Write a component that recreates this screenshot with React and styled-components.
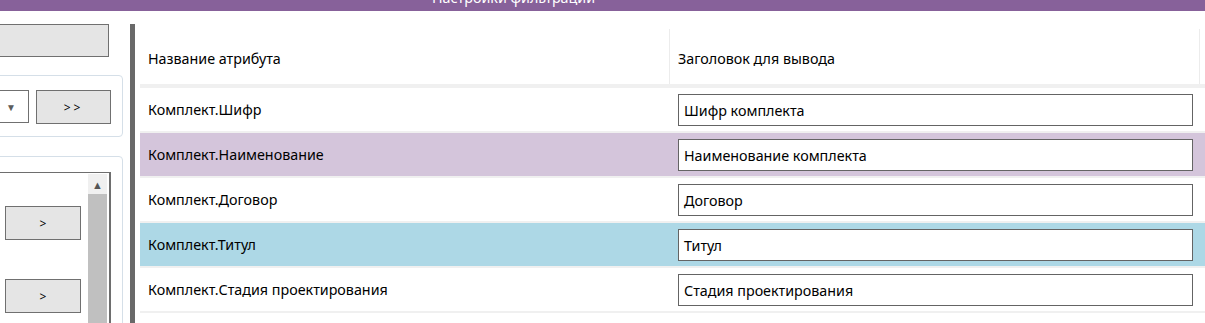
import React from 'react';
import styled, { createGlobalStyle } from 'styled-components';

const GlobalStyle = createGlobalStyle`
  html, body {
    margin: 0;
    padding: 0;
    background: #ffffff;
    font-family: "Noto Sans", "Open Sans", sans-serif;
    font-size: 14.3px;
    color: #000;
  }
`;

const Window = styled.div`
  width: 1205px;
  height: 323px;
  overflow: hidden;
  display: flex;
  flex-direction: column;
`;

const TitleBar = styled.div`
  height: 11px;
  flex: none;
  background: #87619a;
  overflow: hidden;
  padding-left: 432px;
`;

const TitleText = styled.div`
  color: #ffffff;
  font-size: 14.3px;
  line-height: 14px;
  margin-top: -9px;
  white-space: nowrap;
`;

const Main = styled.div`
  flex: 1;
  display: flex;
  min-height: 0;
`;

const LeftPanel = styled.div`
  width: 123px;
  flex: none;
  overflow: hidden;
  padding-top: 13px;
  display: flex;
  flex-direction: column;
`;

const GrayButton = styled.button`
  font-family: inherit;
  font-size: 12px;
  color: #000;
  background: #e5e5e5;
  border: 1px solid #707070;
  border-radius: 0;
  padding: 0;
  height: ${(p) => p.$h || 33}px;
  width: ${(p) => p.$w}px;
  margin-left: ${(p) => p.$ml || 0}px;
  flex: none;
  letter-spacing: ${(p) => p.$ls || 0}px;
`;

const GroupBox = styled.div`
  box-sizing: border-box;
  margin-left: -40px;
  margin-top: ${(p) => p.$mt}px;
  width: 163px;
  border: 1px solid #d5dfe8;
  border-radius: 4px;
  flex: none;
  height: ${(p) => (p.$h ? `${p.$h}px` : 'auto')};
  padding: ${(p) => p.$pad};
  display: flex;
  gap: 7px;
`;

const Combo = styled.div`
  width: 68px;
  height: 33px;
  border: 1px solid #707070;
  background: #fff;
  display: flex;
  align-items: center;
  justify-content: flex-end;
  padding-right: 12px;
  font-size: 10px;
  color: #5c5c5c;
  box-sizing: border-box;
`;

const ListBox = styled.div`
  width: 150px;
  height: 200px;
  border: 1px solid #6e6e6e;
  border-right-width: 2px;
  display: flex;
  justify-content: space-between;
  padding: 1px 2px 0 0;
  box-sizing: border-box;
`;

const ListItems = styled.div`
  display: flex;
  flex-direction: column;
  gap: 39px;
  padding-top: 32px;
  padding-left: 43px;
`;

const ScrollBar = styled.div`
  width: 19px;
  display: flex;
  flex-direction: column;
`;

const ScrollArrow = styled.div`
  height: 20px;
  background: #f0f0f0;
  display: flex;
  align-items: center;
  justify-content: center;
  font-size: 11px;
  color: #555555;
`;

const ScrollThumb = styled.div`
  flex: 1;
  background: #c0c0c0;
`;

const Separator = styled.div`
  width: 5px;
  flex: none;
  margin-left: 7px;
  margin-top: 13px;
  background: #696969;
`;

const Table = styled.div`
  flex: 1;
  margin-left: 5px;
  padding-top: 18px;
  display: flex;
  flex-direction: column;
`;

const Grid = styled.div`
  display: grid;
  grid-template-columns: 530px 530px 1fr;
  background: ${(p) => p.$bg || '#ffffff'};
  height: ${(p) => p.$h}px;
  border-bottom: ${(p) => p.$bb}px solid #f0f0f0;
  align-items: center;
`;

const HeadCell = styled.div`
  height: 100%;
  display: flex;
  align-items: center;
  padding-left: 8px;
  padding-top: 3px;
  box-sizing: border-box;
  border-right: ${(p) => (p.$line ? '1px solid #ececec' : 'none')};
`;

const Cell = styled.div`
  padding-left: 8px;
  white-space: nowrap;
`;

const EditCell = styled.div`
  padding-left: 8px;
  padding-top: 1px;
`;

const TextBox = styled.div`
  width: 515px;
  height: 32px;
  border: 1px solid #646464;
  background: #ffffff;
  box-sizing: border-box;
  display: flex;
  align-items: center;
  padding-left: 5px;
  white-space: nowrap;
`;

const rows = [
  { name: 'Комплект.Шифр', title: 'Шифр комплекта', bg: '#ffffff' },
  { name: 'Комплект.Наименование', title: 'Наименование комплекта', bg: '#d4c5db' },
  { name: 'Комплект.Договор', title: 'Договор', bg: '#ffffff' },
  { name: 'Комплект.Титул', title: 'Титул', bg: '#add8e6' },
  { name: 'Комплект.Стадия проектирования', title: 'Стадия проектирования', bg: '#ffffff' },
];

export default function App() {
  return (
    <Window>
      <GlobalStyle />
      <TitleBar>
        <TitleText>Настройки фильтрации</TitleText>
      </TitleBar>
      <Main>
        <LeftPanel>
          <GrayButton $w={140} $ml={-31} />
          <GroupBox $mt={18} $h={62} $pad="14px 0 0 0">
            <Combo>▼</Combo>
            <GrayButton $w={75} $h={34} $ls={3}>&gt;&gt;</GrayButton>
          </GroupBox>
          <GroupBox $mt={19} $pad="15px 0 0 0">
            <ListBox>
              <ListItems>
                <GrayButton $w={76} $h={34}>&gt;</GrayButton>
                <GrayButton $w={76} $h={34}>&gt;</GrayButton>
              </ListItems>
              <ScrollBar>
                <ScrollArrow>▲</ScrollArrow>
                <ScrollThumb />
              </ScrollBar>
            </ListBox>
          </GroupBox>
        </LeftPanel>
        <Separator />
        <Table>
          <Grid $h={55} $bb={4}>
            <HeadCell $line>Название атрибута</HeadCell>
            <HeadCell $line>Заголовок для вывода</HeadCell>
            <div />
          </Grid>
          {rows.map((r) => (
            <Grid key={r.name} $h={43} $bb={2} $bg={r.bg}>
              <Cell>{r.name}</Cell>
              <EditCell>
                <TextBox>{r.title}</TextBox>
              </EditCell>
              <div />
            </Grid>
          ))}
        </Table>
      </Main>
    </Window>
  );
}
